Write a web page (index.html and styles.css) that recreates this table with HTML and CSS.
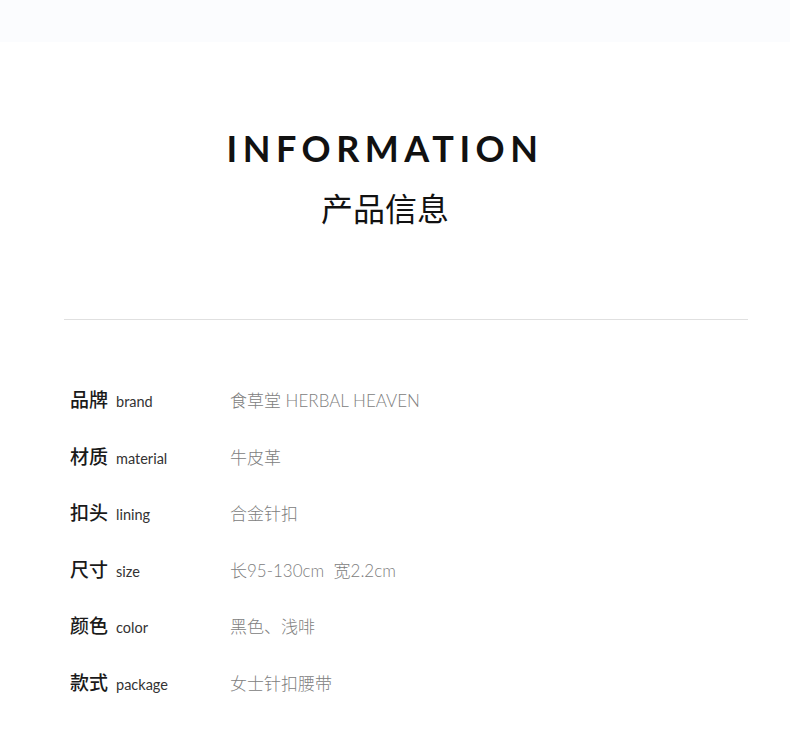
FILE: index.html
```html
<!DOCTYPE html>
<html lang="zh-CN">
<head>
    <meta charset="UTF-8">
    <meta name="viewport" content="width=device-width, initial-scale=1.0">
    <title>产品信息</title>
    <link rel="stylesheet" href="styles.css">
</head>
<body>
    <div class="top-strip"></div>
    <div class="header">
        <h1 class="title-en">INFORMATION</h1>
        <h2 class="title-cn">产品信息</h2>
    </div>
    <div class="divider"></div>
    <div class="info-list">
        <div class="info-row">
            <div class="label"><span class="label-cn">品牌</span><span class="label-en">brand</span></div>
            <div class="value">食草堂 HERBAL HEAVEN</div>
        </div>
        <div class="info-row">
            <div class="label"><span class="label-cn">材质</span><span class="label-en">material</span></div>
            <div class="value">牛皮革</div>
        </div>
        <div class="info-row">
            <div class="label"><span class="label-cn">扣头</span><span class="label-en">lining</span></div>
            <div class="value">合金针扣</div>
        </div>
        <div class="info-row">
            <div class="label"><span class="label-cn">尺寸</span><span class="label-en">size</span></div>
            <div class="value">长95-130cm&nbsp;&nbsp;宽2.2cm</div>
        </div>
        <div class="info-row">
            <div class="label"><span class="label-cn">颜色</span><span class="label-en">color</span></div>
            <div class="value">黑色、浅啡</div>
        </div>
        <div class="info-row">
            <div class="label"><span class="label-cn">款式</span><span class="label-en">package</span></div>
            <div class="value">女士针扣腰带</div>
        </div>
    </div>
</body>
</html>
```

FILE: styles.css
```css
body {
    margin: 0;
    background: #fff;
    font-family: "Lato", "Noto Sans CJK SC", sans-serif;
    color: #222;
}
.top-strip {
    height: 42px;
    background: #fbfcfe;
}
.header {
    padding: 86px 20px 0 0;
    text-align: center;
}
.title-en {
    margin: 0;
    font-family: "Lato", sans-serif;
    font-weight: 700;
    font-size: 36px;
    line-height: 40px;
    letter-spacing: 5.5px;
    color: #111;
}
.title-cn {
    margin: 19px 0 0;
    font-family: "Noto Sans CJK SC", sans-serif;
    font-weight: 400;
    font-size: 32px;
    line-height: 40px;
    color: #111;
}
.divider {
    margin: 92px 42px 0 64px;
    height: 1px;
    background: #e0e0e0;
}
.info-list {
    padding: 65px 0 0 70px;
}
.info-row {
    display: flex;
    align-items: baseline;
    height: 56.6px;
}
.label {
    width: 160px;
}
.label-cn {
    font-family: "Noto Sans CJK SC", sans-serif;
    font-weight: 500;
    font-size: 19px;
    color: #1a1a1a;
}
.label-en {
    margin-left: 8px;
    font-family: "Lato", sans-serif;
    font-size: 14.5px;
    color: #333;
}
.value {
    font-family: "Lato", "Noto Sans CJK SC", sans-serif;
    font-weight: 300;
    font-size: 17px;
    color: #808080;
}
```
